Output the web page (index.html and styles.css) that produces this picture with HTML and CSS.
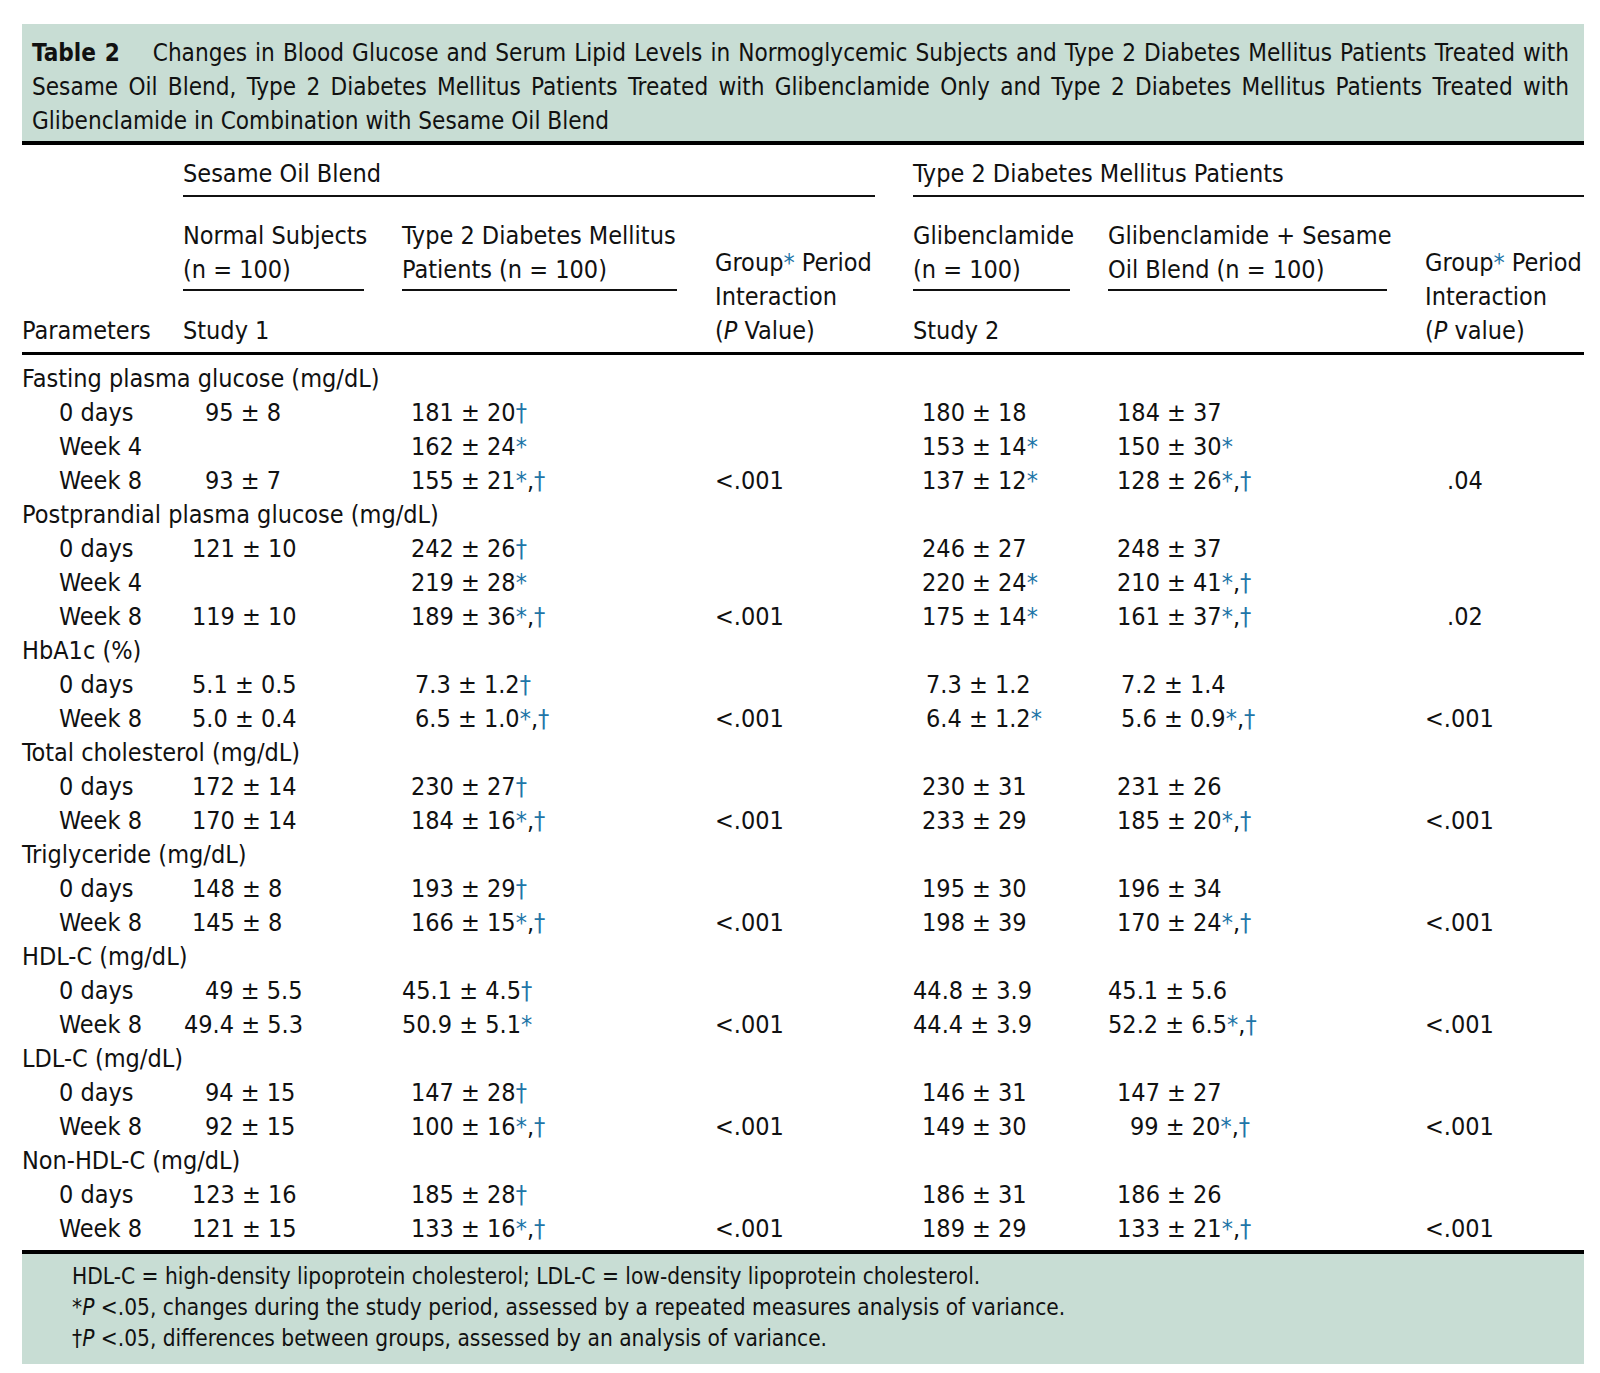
FILE: index.html
```html
<!DOCTYPE html>
<html>
<head>
<meta charset="utf-8">
<link rel="stylesheet" href="styles.css">
</head>
<body>
<div class="page">
  <div class="caption">
    <span class="cl j"><b class="tno">Table 2</b>Changes in Blood Glucose and Serum Lipid Levels in Normoglycemic Subjects and Type 2 Diabetes Mellitus Patients Treated with</span>
    <span class="cl j">Sesame Oil Blend, Type 2 Diabetes Mellitus Patients Treated with Glibenclamide Only and Type 2 Diabetes Mellitus Patients Treated with</span>
    <span class="cl">Glibenclamide in Combination with Sesame Oil Blend</span>
  </div>
  <table class="t">
    <colgroup>
      <col class="c0"><col class="c1"><col class="c2"><col class="c3"><col class="c4"><col class="c5"><col class="c6">
    </colgroup>
    <thead>
      <tr class="ha">
        <th></th>
        <th colspan="3" class="grp gap"><span class="ul">Sesame Oil Blend</span></th>
        <th colspan="3" class="grp"><span class="ul">Type 2 Diabetes Mellitus Patients</span></th>
      </tr>
      <tr class="hb">
        <th class="bot">Parameters</th>
        <th class="gap"><div class="ul2">Normal Subjects<br>(n = 100)</div><div class="study">Study 1</div></th>
        <th class="gap"><div class="ul2">Type 2 Diabetes Mellitus<br>Patients (n = 100)</div></th>
        <th class="bot">Group<span class="b">*</span> Period<br>Interaction<br>(<i>P</i> Value)</th>
        <th class="gap"><div class="ul2">Glibenclamide<br>(n = 100)</div><div class="study">Study 2</div></th>
        <th class="gap"><div class="ul2">Glibenclamide + Sesame<br>Oil Blend (n = 100)</div></th>
        <th class="bot">Group<span class="b">*</span> Period<br>Interaction<br>(<i>P</i> value)</th>
      </tr>
    </thead>
    <tbody>
      <tr class="first"><td colspan="7" class="sec">Fasting plasma glucose (mg/dL)</td></tr>
      <tr><td class="sub">0 days</td><td class="d2">95 ± 8</td><td class="d3">181 ± 20<span class="b">†</span></td><td></td><td class="d3">180 ± 18</td><td class="d3">184 ± 37</td><td></td></tr>
      <tr><td class="sub">Week 4</td><td></td><td class="d3">162 ± 24<span class="b">*</span></td><td></td><td class="d3">153 ± 14<span class="b">*</span></td><td class="d3">150 ± 30<span class="b">*</span></td><td></td></tr>
      <tr><td class="sub">Week 8</td><td class="d2">93 ± 7</td><td class="d3">155 ± 21<span class="b">*</span>,<span class="b">†</span></td><td>&lt;.001</td><td class="d3">137 ± 12<span class="b">*</span></td><td class="d3">128 ± 26<span class="b">*</span>,<span class="b">†</span></td><td class="d2">.04</td></tr>

      <tr><td colspan="7" class="sec">Postprandial plasma glucose (mg/dL)</td></tr>
      <tr><td class="sub">0 days</td><td class="d3">121 ± 10</td><td class="d3">242 ± 26<span class="b">†</span></td><td></td><td class="d3">246 ± 27</td><td class="d3">248 ± 37</td><td></td></tr>
      <tr><td class="sub">Week 4</td><td></td><td class="d3">219 ± 28<span class="b">*</span></td><td></td><td class="d3">220 ± 24<span class="b">*</span></td><td class="d3">210 ± 41<span class="b">*</span>,<span class="b">†</span></td><td></td></tr>
      <tr><td class="sub">Week 8</td><td class="d3">119 ± 10</td><td class="d3">189 ± 36<span class="b">*</span>,<span class="b">†</span></td><td>&lt;.001</td><td class="d3">175 ± 14<span class="b">*</span></td><td class="d3">161 ± 37<span class="b">*</span>,<span class="b">†</span></td><td class="d2">.02</td></tr>

      <tr><td colspan="7" class="sec">HbA1c (%)</td></tr>
      <tr><td class="sub">0 days</td><td class="d3">5.1 ± 0.5</td><td class="dd">7.3 ± 1.2<span class="b">†</span></td><td></td><td class="dd">7.3 ± 1.2</td><td class="dd">7.2 ± 1.4</td><td></td></tr>
      <tr><td class="sub">Week 8</td><td class="d3">5.0 ± 0.4</td><td class="dd">6.5 ± 1.0<span class="b">*</span>,<span class="b">†</span></td><td>&lt;.001</td><td class="dd">6.4 ± 1.2<span class="b">*</span></td><td class="dd">5.6 ± 0.9<span class="b">*</span>,<span class="b">†</span></td><td>&lt;.001</td></tr>

      <tr><td colspan="7" class="sec">Total cholesterol (mg/dL)</td></tr>
      <tr><td class="sub">0 days</td><td class="d3">172 ± 14</td><td class="d3">230 ± 27<span class="b">†</span></td><td></td><td class="d3">230 ± 31</td><td class="d3">231 ± 26</td><td></td></tr>
      <tr><td class="sub">Week 8</td><td class="d3">170 ± 14</td><td class="d3">184 ± 16<span class="b">*</span>,<span class="b">†</span></td><td>&lt;.001</td><td class="d3">233 ± 29</td><td class="d3">185 ± 20<span class="b">*</span>,<span class="b">†</span></td><td>&lt;.001</td></tr>

      <tr><td colspan="7" class="sec">Triglyceride (mg/dL)</td></tr>
      <tr><td class="sub">0 days</td><td class="d3">148 ± 8</td><td class="d3">193 ± 29<span class="b">†</span></td><td></td><td class="d3">195 ± 30</td><td class="d3">196 ± 34</td><td></td></tr>
      <tr><td class="sub">Week 8</td><td class="d3">145 ± 8</td><td class="d3">166 ± 15<span class="b">*</span>,<span class="b">†</span></td><td>&lt;.001</td><td class="d3">198 ± 39</td><td class="d3">170 ± 24<span class="b">*</span>,<span class="b">†</span></td><td>&lt;.001</td></tr>

      <tr><td colspan="7" class="sec">HDL-C (mg/dL)</td></tr>
      <tr><td class="sub">0 days</td><td class="d2">49 ± 5.5</td><td>45.1 ± 4.5<span class="b">†</span></td><td></td><td>44.8 ± 3.9</td><td>45.1 ± 5.6</td><td></td></tr>
      <tr><td class="sub">Week 8</td><td class="d1">49.4 ± 5.3</td><td>50.9 ± 5.1<span class="b">*</span></td><td>&lt;.001</td><td>44.4 ± 3.9</td><td>52.2 ± 6.5<span class="b">*</span>,<span class="b">†</span></td><td>&lt;.001</td></tr>

      <tr><td colspan="7" class="sec">LDL-C (mg/dL)</td></tr>
      <tr><td class="sub">0 days</td><td class="d2">94 ± 15</td><td class="d3">147 ± 28<span class="b">†</span></td><td></td><td class="d3">146 ± 31</td><td class="d3">147 ± 27</td><td></td></tr>
      <tr><td class="sub">Week 8</td><td class="d2">92 ± 15</td><td class="d3">100 ± 16<span class="b">*</span>,<span class="b">†</span></td><td>&lt;.001</td><td class="d3">149 ± 30</td><td class="d2">99 ± 20<span class="b">*</span>,<span class="b">†</span></td><td>&lt;.001</td></tr>

      <tr><td colspan="7" class="sec">Non-HDL-C (mg/dL)</td></tr>
      <tr><td class="sub">0 days</td><td class="d3">123 ± 16</td><td class="d3">185 ± 28<span class="b">†</span></td><td></td><td class="d3">186 ± 31</td><td class="d3">186 ± 26</td><td></td></tr>
      <tr class="last"><td class="sub">Week 8</td><td class="d3">121 ± 15</td><td class="d3">133 ± 16<span class="b">*</span>,<span class="b">†</span></td><td>&lt;.001</td><td class="d3">189 ± 29</td><td class="d3">133 ± 21<span class="b">*</span>,<span class="b">†</span></td><td>&lt;.001</td></tr>
    </tbody>
  </table>
  <div class="foot">
    <p>HDL-C = high-density lipoprotein cholesterol; LDL-C = low-density lipoprotein cholesterol.</p>
    <p>*<i>P</i> &lt;.05, changes during the study period, assessed by a repeated measures analysis of variance.</p>
    <p>†<i>P</i> &lt;.05, differences between groups, assessed by an analysis of variance.</p>
  </div>
</div>
</body>
</html>
```

FILE: styles.css
```css
html, body {
  margin: 0;
  padding: 0;
  background: #fff;
}

body {
  font-family: "DejaVu Sans Condensed", "DejaVu Sans", sans-serif;
  font-stretch: condensed;
  font-size: 25px;
  color: #111;
}

.page {
  width: 1562px;
  margin-left: 22px;
  padding-top: 24px;
}

.caption {
  background: #c8ddd4;
  padding: 12px 15px 3px 10px;
  border-bottom: 4px solid #000;
  font-size: 24.1px;
  line-height: 34px;
}

.cl {
  display: block;
  white-space: nowrap;
}

.cl.j {
  text-align: justify;
  text-align-last: justify;
}

.tno {
  font-weight: bold;
  margin-right: 33px;
}

.t {
  width: 1562px;
  table-layout: fixed;
  border-collapse: collapse;
  border-spacing: 0;
  line-height: 34px;
}

.c0 { width: 161px; }
.c1 { width: 219px; }
.c2 { width: 313px; }
.c3 { width: 198px; }
.c4 { width: 195px; }
.c5 { width: 317px; }
.c6 { width: 159px; }

.t th {
  font-weight: normal;
  text-align: left;
  padding: 0;
  vertical-align: top;
  white-space: nowrap;
}

.t td {
  padding: 0;
  white-space: nowrap;
  height: 34px;
}

.ha th {
  padding-top: 12px;
}

.ul {
  display: block;
  padding-bottom: 4px;
  border-bottom: 2px solid #111;
}

.gap {
  padding-right: 38px !important;
}

.hb th {
  padding-top: 22px;
  padding-bottom: 4px;
  border-bottom: 3px solid #000;
}

.hb th.bot {
  vertical-align: bottom;
}

.ul2 {
  padding-bottom: 2px;
  border-bottom: 2px solid #111;
}

.study {
  margin-top: 23px;
}

.b {
  color: #1f76a8;
}

.first td {
  padding-top: 7px;
}

.last td {
  padding-bottom: 4px;
}

.sec {
  padding-left: 0;
}

.t td.sub {
  padding-left: 37px;
}

.t td.d1 { padding-left: 1px; }
.t td.d3 { padding-left: 9px; }
.t td.dd { padding-left: 13px; }
.t td.d2 { padding-left: 22px; }

.foot {
  background: #c8ddd4;
  border-top: 4px solid #000;
  padding: 7px 10px 10px 50px;
  font-size: 22.5px;
  line-height: 31px;
}

.foot p {
  margin: 0;
}
```
